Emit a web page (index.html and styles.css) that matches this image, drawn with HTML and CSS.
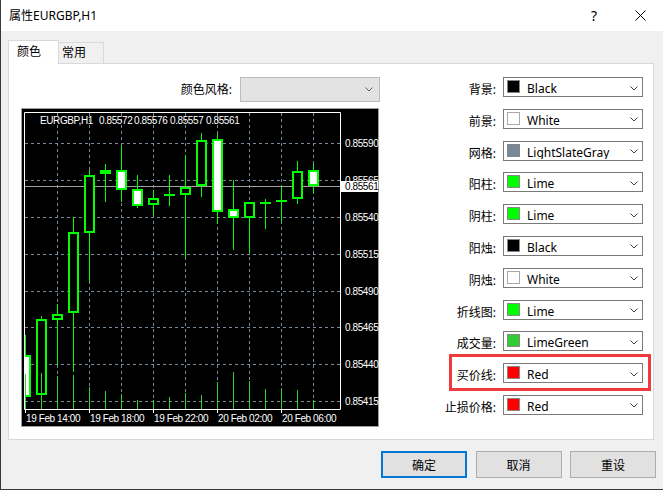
FILE: index.html
```html
<!DOCTYPE html>
<html>
<head>
<meta charset="utf-8">
<title>属性EURGBP,H1</title>
<link rel="stylesheet" href="styles.css">
</head>
<body>
<div class="window">
  <div class="titlebar">
    <span class="title">属性EURGBP,H1</span>
    <span class="tb-btn tb-help">?</span>
    <span class="tb-btn tb-close"><svg width="11" height="11" viewBox="0 0 11 11"><path d="M0.5 0.5 L10.5 10.5 M10.5 0.5 L0.5 10.5" stroke="#000" stroke-width="1" fill="none"/></svg></span>
  </div>
  <div class="content">
    <div class="tabs">
      <div class="tab active">颜色</div>
      <div class="tab">常用</div>
    </div>
    <div class="panel">
      <div class="left">
        <div class="style-row">
          <span class="lbl">颜色风格:</span>
          <div class="combo-disabled"><svg class="chev" width="8" height="5" viewBox="0 0 8 5"><path d="M0.5 0.5 L4 4 L7.5 0.5" stroke="#606060" fill="none"/></svg></div>
        </div>
        <div class="chart">
          <svg width="358" height="319" viewBox="21 108 358 319">
            <defs>
              <clipPath id="plot"><rect x="25" y="113" width="316" height="296"/></clipPath>
              <clipPath id="abovebox"><rect x="341" y="170" width="38" height="11"/></clipPath>
            </defs>
            <rect x="21" y="108" width="358" height="319" fill="#000"/>
            <rect x="21.5" y="108.5" width="357" height="318" fill="none" stroke="#a0a0a0"/>
            <g stroke="#778899" stroke-dasharray="3 3" fill="none">
              <line x1="25" y1="143.5" x2="340" y2="143.5"/>
              <line x1="25" y1="180.5" x2="340" y2="180.5"/>
              <line x1="25" y1="217.5" x2="340" y2="217.5"/>
              <line x1="25" y1="254.5" x2="340" y2="254.5"/>
              <line x1="25" y1="291.5" x2="340" y2="291.5"/>
              <line x1="25" y1="327.5" x2="340" y2="327.5"/>
              <line x1="25" y1="364.5" x2="340" y2="364.5"/>
              <line x1="25" y1="401.5" x2="340" y2="401.5"/>
              <line x1="57.5" y1="113" x2="57.5" y2="409"/>
              <line x1="89.5" y1="113" x2="89.5" y2="409"/>
              <line x1="121.5" y1="113" x2="121.5" y2="409"/>
              <line x1="153.5" y1="113" x2="153.5" y2="409"/>
              <line x1="185.5" y1="113" x2="185.5" y2="409"/>
              <line x1="217.5" y1="113" x2="217.5" y2="409"/>
              <line x1="249.5" y1="113" x2="249.5" y2="409"/>
              <line x1="281.5" y1="113" x2="281.5" y2="409"/>
              <line x1="313.5" y1="113" x2="313.5" y2="409"/>
            </g>
            <line x1="25" y1="186.5" x2="341" y2="186.5" stroke="#a0a0a0"/>
            <g clip-path="url(#plot)" stroke="#00ff00" fill="none">
              <line x1="25.5" y1="335" x2="25.5" y2="398"/>
              <line x1="41.5" y1="316" x2="41.5" y2="395"/>
              <line x1="57.5" y1="304" x2="57.5" y2="365"/>
              <line x1="73.5" y1="217" x2="73.5" y2="372"/>
              <line x1="89.5" y1="170" x2="89.5" y2="282"/>
              <line x1="105.5" y1="164" x2="105.5" y2="202"/>
              <line x1="121.5" y1="146" x2="121.5" y2="202"/>
              <line x1="137.5" y1="175" x2="137.5" y2="208"/>
              <line x1="153.5" y1="190" x2="153.5" y2="215"/>
              <line x1="169.5" y1="175" x2="169.5" y2="206"/>
              <line x1="185.5" y1="155" x2="185.5" y2="258"/>
              <line x1="201.5" y1="133" x2="201.5" y2="197"/>
              <line x1="217.5" y1="134" x2="217.5" y2="224"/>
              <line x1="233.5" y1="180" x2="233.5" y2="250"/>
              <line x1="249.5" y1="202" x2="249.5" y2="253"/>
              <line x1="265.5" y1="199" x2="265.5" y2="229"/>
              <line x1="281.5" y1="187" x2="281.5" y2="221"/>
              <line x1="297.5" y1="161" x2="297.5" y2="204"/>
              <line x1="313.5" y1="164" x2="313.5" y2="193"/>
              <g stroke-width="2">
                <rect x="21" y="356" width="9" height="40" fill="#fff"/>
                <rect x="37" y="320" width="9" height="74" fill="#000"/>
                <rect x="53" y="315" width="9" height="4" fill="#000"/>
                <rect x="69" y="233" width="9" height="79" fill="#000"/>
                <rect x="85" y="176" width="9" height="56" fill="#000"/>
                <rect x="101" y="171" width="9" height="2" fill="#000"/>
                <rect x="117" y="171" width="9" height="18" fill="#fff"/>
                <rect x="133" y="190" width="9" height="15" fill="#fff"/>
                <rect x="149" y="199" width="9" height="5" fill="#000"/>
                <line x1="164" y1="195" x2="175" y2="195"/>
                <rect x="181" y="188" width="9" height="6" fill="#000"/>
                <rect x="197" y="141" width="9" height="44" fill="#000"/>
                <rect x="213" y="140" width="9" height="71" fill="#fff"/>
                <rect x="229" y="210" width="9" height="7" fill="#fff"/>
                <rect x="245" y="203" width="9" height="14" fill="#000"/>
                <line x1="260" y1="203" x2="271" y2="203"/>
                <line x1="276" y1="201" x2="287" y2="201"/>
                <rect x="293" y="172" width="9" height="26" fill="#000"/>
                <rect x="309" y="171" width="9" height="14" fill="#fff"/>
              </g>
            </g>
            <g stroke="#32cd32">
              <line x1="25.5" y1="374" x2="25.5" y2="409"/>
              <line x1="41.5" y1="373" x2="41.5" y2="409"/>
              <line x1="57.5" y1="376" x2="57.5" y2="409"/>
              <line x1="73.5" y1="375" x2="73.5" y2="409"/>
              <line x1="89.5" y1="387" x2="89.5" y2="409"/>
              <line x1="105.5" y1="391" x2="105.5" y2="409"/>
              <line x1="121.5" y1="394" x2="121.5" y2="409"/>
              <line x1="137.5" y1="400" x2="137.5" y2="409"/>
              <line x1="153.5" y1="400" x2="153.5" y2="409"/>
              <line x1="169.5" y1="397" x2="169.5" y2="409"/>
              <line x1="185.5" y1="393" x2="185.5" y2="409"/>
              <line x1="201.5" y1="395" x2="201.5" y2="409"/>
              <line x1="217.5" y1="382" x2="217.5" y2="409"/>
              <line x1="233.5" y1="372" x2="233.5" y2="409"/>
              <line x1="249.5" y1="381" x2="249.5" y2="409"/>
              <line x1="265.5" y1="389" x2="265.5" y2="409"/>
              <line x1="281.5" y1="388" x2="281.5" y2="409"/>
              <line x1="297.5" y1="390" x2="297.5" y2="409"/>
              <line x1="313.5" y1="400" x2="313.5" y2="409"/>
            </g>
            <path d="M24.5 112.5 H340.5 V409.5 H24.5 Z" fill="none" stroke="#fff"/>
            <g stroke="#fff">
              <line x1="25.5" y1="409" x2="25.5" y2="413"/>
              <line x1="89.5" y1="409" x2="89.5" y2="413"/>
              <line x1="153.5" y1="409" x2="153.5" y2="413"/>
              <line x1="217.5" y1="409" x2="217.5" y2="413"/>
              <line x1="281.5" y1="409" x2="281.5" y2="413"/>
            </g>
            <g class="ctext">
              <text x="40" y="124">EURGBP,H1</text>
              <text x="99" y="124">0.85572</text>
              <text x="134" y="124">0.85576</text>
              <text x="170" y="124">0.85557</text>
              <text x="206" y="124">0.85561</text>
              <text x="345" y="146.5">0.85590</text>
              <text x="345" y="220.5">0.85540</text>
              <text x="345" y="257.5">0.85515</text>
              <text x="345" y="294.5">0.85490</text>
              <text x="345" y="330.5">0.85465</text>
              <text x="345" y="367.5">0.85440</text>
              <text x="345" y="404.5">0.85415</text>
              <text x="26" y="422">19 Feb 14:00</text>
              <text x="90" y="422">19 Feb 18:00</text>
              <text x="154" y="422">19 Feb 22:00</text>
              <text x="218" y="422">20 Feb 02:00</text>
              <text x="282" y="422">20 Feb 06:00</text>
            </g>
            <g class="ctext" clip-path="url(#abovebox)">
              <text x="345" y="183.5">0.85565</text>
            </g>
            <rect x="341" y="181" width="37" height="11" fill="#fff"/>
            <text class="ctext dark" x="345" y="190">0.85561</text>
          </svg>
        </div>
      </div>
      <div class="colors">
        <span class="lbl">背景:</span>
        <div class="dd"><span class="sw black"></span><span class="txt">Black</span><svg class="chev" width="8" height="5" viewBox="0 0 8 5"><path d="M0.5 0.5 L4 4 L7.5 0.5" stroke="#404040" fill="none"/></svg></div>
        <span class="lbl">前景:</span>
        <div class="dd"><span class="sw white"></span><span class="txt">White</span><svg class="chev" width="8" height="5" viewBox="0 0 8 5"><path d="M0.5 0.5 L4 4 L7.5 0.5" stroke="#404040" fill="none"/></svg></div>
        <span class="lbl">网格:</span>
        <div class="dd"><span class="sw slate"></span><span class="txt clipped">LightSlateGray</span><svg class="chev" width="8" height="5" viewBox="0 0 8 5"><path d="M0.5 0.5 L4 4 L7.5 0.5" stroke="#404040" fill="none"/></svg></div>
        <span class="lbl">阳柱:</span>
        <div class="dd"><span class="sw lime"></span><span class="txt">Lime</span><svg class="chev" width="8" height="5" viewBox="0 0 8 5"><path d="M0.5 0.5 L4 4 L7.5 0.5" stroke="#404040" fill="none"/></svg></div>
        <span class="lbl">阴柱:</span>
        <div class="dd"><span class="sw lime"></span><span class="txt">Lime</span><svg class="chev" width="8" height="5" viewBox="0 0 8 5"><path d="M0.5 0.5 L4 4 L7.5 0.5" stroke="#404040" fill="none"/></svg></div>
        <span class="lbl">阳烛:</span>
        <div class="dd"><span class="sw black"></span><span class="txt">Black</span><svg class="chev" width="8" height="5" viewBox="0 0 8 5"><path d="M0.5 0.5 L4 4 L7.5 0.5" stroke="#404040" fill="none"/></svg></div>
        <span class="lbl">阴烛:</span>
        <div class="dd"><span class="sw white"></span><span class="txt">White</span><svg class="chev" width="8" height="5" viewBox="0 0 8 5"><path d="M0.5 0.5 L4 4 L7.5 0.5" stroke="#404040" fill="none"/></svg></div>
        <span class="lbl">折线图:</span>
        <div class="dd"><span class="sw lime"></span><span class="txt">Lime</span><svg class="chev" width="8" height="5" viewBox="0 0 8 5"><path d="M0.5 0.5 L4 4 L7.5 0.5" stroke="#404040" fill="none"/></svg></div>
        <span class="lbl">成交量:</span>
        <div class="dd"><span class="sw limegreen"></span><span class="txt">LimeGreen</span><svg class="chev" width="8" height="5" viewBox="0 0 8 5"><path d="M0.5 0.5 L4 4 L7.5 0.5" stroke="#404040" fill="none"/></svg></div>
        <span class="lbl">买价线:</span>
        <div class="dd"><span class="sw red"></span><span class="txt">Red</span><svg class="chev" width="8" height="5" viewBox="0 0 8 5"><path d="M0.5 0.5 L4 4 L7.5 0.5" stroke="#404040" fill="none"/></svg></div>
        <span class="lbl">止损价格:</span>
        <div class="dd"><span class="sw red"></span><span class="txt">Red</span><svg class="chev" width="8" height="5" viewBox="0 0 8 5"><path d="M0.5 0.5 L4 4 L7.5 0.5" stroke="#404040" fill="none"/></svg></div>
      </div>
    </div>
    <div class="buttons">
      <button class="btn primary">确定</button>
      <button class="btn">取消</button>
      <button class="btn">重设</button>
    </div>
  </div>
  <div class="highlight"></div>
</div>
</body>
</html>
```

FILE: styles.css
```css
html, body {
  margin: 0;
  padding: 0;
  background: #f0f0f0;
}

body {
  font-family: "Noto Sans", "Noto Sans CJK SC", sans-serif;
  font-size: 12px;
  color: #000;
}

.window {
  position: relative;
  width: 663px;
  height: 490px;
  box-sizing: border-box;
  background: #f0f0f0;
  border-left: 1px solid #3a3a3a;
  border-bottom: 1px solid #3a3a3a;
  display: flex;
  flex-direction: column;
  overflow: hidden;
}

.titlebar {
  height: 31px;
  flex: none;
  background: #fff;
  display: flex;
  align-items: center;
  padding-left: 8px;
}

.title {
  flex: 1;
  font-size: 12px;
  line-height: 16px;
}

.tb-btn {
  width: 46px;
  height: 31px;
  display: flex;
  align-items: center;
  justify-content: center;
}

.tb-help {
  font-size: 14px;
  line-height: 16px;
}

.content {
  flex: 1;
  display: flex;
  flex-direction: column;
  padding: 9px 9px 0 7px;
}

.tabs {
  display: flex;
  align-items: flex-end;
  height: 23px;
}

.tab {
  box-sizing: border-box;
  height: 21px;
  border: 1px solid #d9d9d9;
  border-bottom: none;
  border-left: none;
  background: #f0f0f0;
  width: 45px;
  padding-left: 3px;
  line-height: 20px;
  font-size: 12px;
}

.tab.active {
  position: relative;
  z-index: 1;
  width: 51px;
  height: 24px;
  margin-bottom: -1px;
  border-left: 1px solid #d9d9d9;
  background: #fff;
  padding-left: 8px;
  line-height: 22px;
}

.panel {
  height: 377px;
  box-sizing: border-box;
  border: 1px solid #d9d9d9;
  background: #fff;
  display: flex;
  padding: 13px 10px 0 12px;
}

.left {
  width: 358px;
  display: flex;
  flex-direction: column;
  gap: 6px;
}

.style-row {
  height: 25px;
  display: flex;
  align-items: center;
  justify-content: flex-end;
  gap: 8px;
  margin-right: -1px;
}

.lbl {
  font-size: 12px;
  line-height: 17px;
  white-space: nowrap;
}

.combo-disabled {
  width: 140px;
  height: 25px;
  box-sizing: border-box;
  border: 1px solid #bcbcbc;
  background: #e3e3e3;
  display: flex;
  align-items: center;
  justify-content: flex-end;
  padding-right: 6px;
}

.chart {
  width: 358px;
  height: 319px;
}

.chart svg {
  display: block;
}

.ctext text,
text.ctext {
  font-family: "Liberation Sans", Arial, sans-serif;
  font-size: 10px;
  letter-spacing: -0.4px;
  fill: #fff;
}

text.ctext.dark {
  fill: #000;
}

.colors {
  margin-left: auto;
  display: grid;
  grid-template-columns: auto 140px;
  grid-auto-rows: 20px;
  column-gap: 7px;
  row-gap: 11.8px;
  align-content: start;
}

.colors .lbl {
  justify-self: end;
  box-sizing: border-box;
  height: 20px;
  padding-top: 4px;
}

.dd {
  position: relative;
  box-sizing: border-box;
  height: 20px;
  border: 1px solid #7a7a7a;
  background: #fff;
  display: flex;
  align-items: flex-start;
  padding: 2px 4px 0 3px;
  overflow: hidden;
}

.sw {
  flex: none;
  box-sizing: border-box;
  width: 13px;
  height: 13px;
  border: 1px solid #888;
}

.sw.black { background: #000; }
.sw.white { background: #fff; border-color: #a8a8a8; }
.sw.slate { background: #778899; }
.sw.lime { background: #00ff00; }
.sw.limegreen { background: #32cd32; }
.sw.red { background: #ff0000; }

.txt {
  flex: 1;
  min-width: 0;
  margin-left: 7px;
  margin-top: 1px;
  font-size: 12px;
  line-height: 16px;
  white-space: nowrap;
  color: #000;
}

.txt.clipped {
  height: 14px;
  overflow: hidden;
}

.dd .chev {
  align-self: center;
  flex: none;
}

.buttons {
  display: flex;
  justify-content: flex-end;
  gap: 8.5px;
  margin-top: 11px;
  margin-right: -2px;
}

.btn {
  width: 86px;
  height: 27px;
  box-sizing: border-box;
  border: 1px solid #adadad;
  background: #e1e1e1;
  font-family: "Noto Sans", "Noto Sans CJK SC", sans-serif;
  font-size: 12px;
  color: #000;
  padding: 0;
}

.btn.primary {
  border: 2px solid #0078d7;
}

.highlight {
  position: absolute;
  left: 448px;
  top: 354px;
  width: 202px;
  height: 37px;
  box-sizing: border-box;
  border: 3px solid #ef3b3b;
}
```
